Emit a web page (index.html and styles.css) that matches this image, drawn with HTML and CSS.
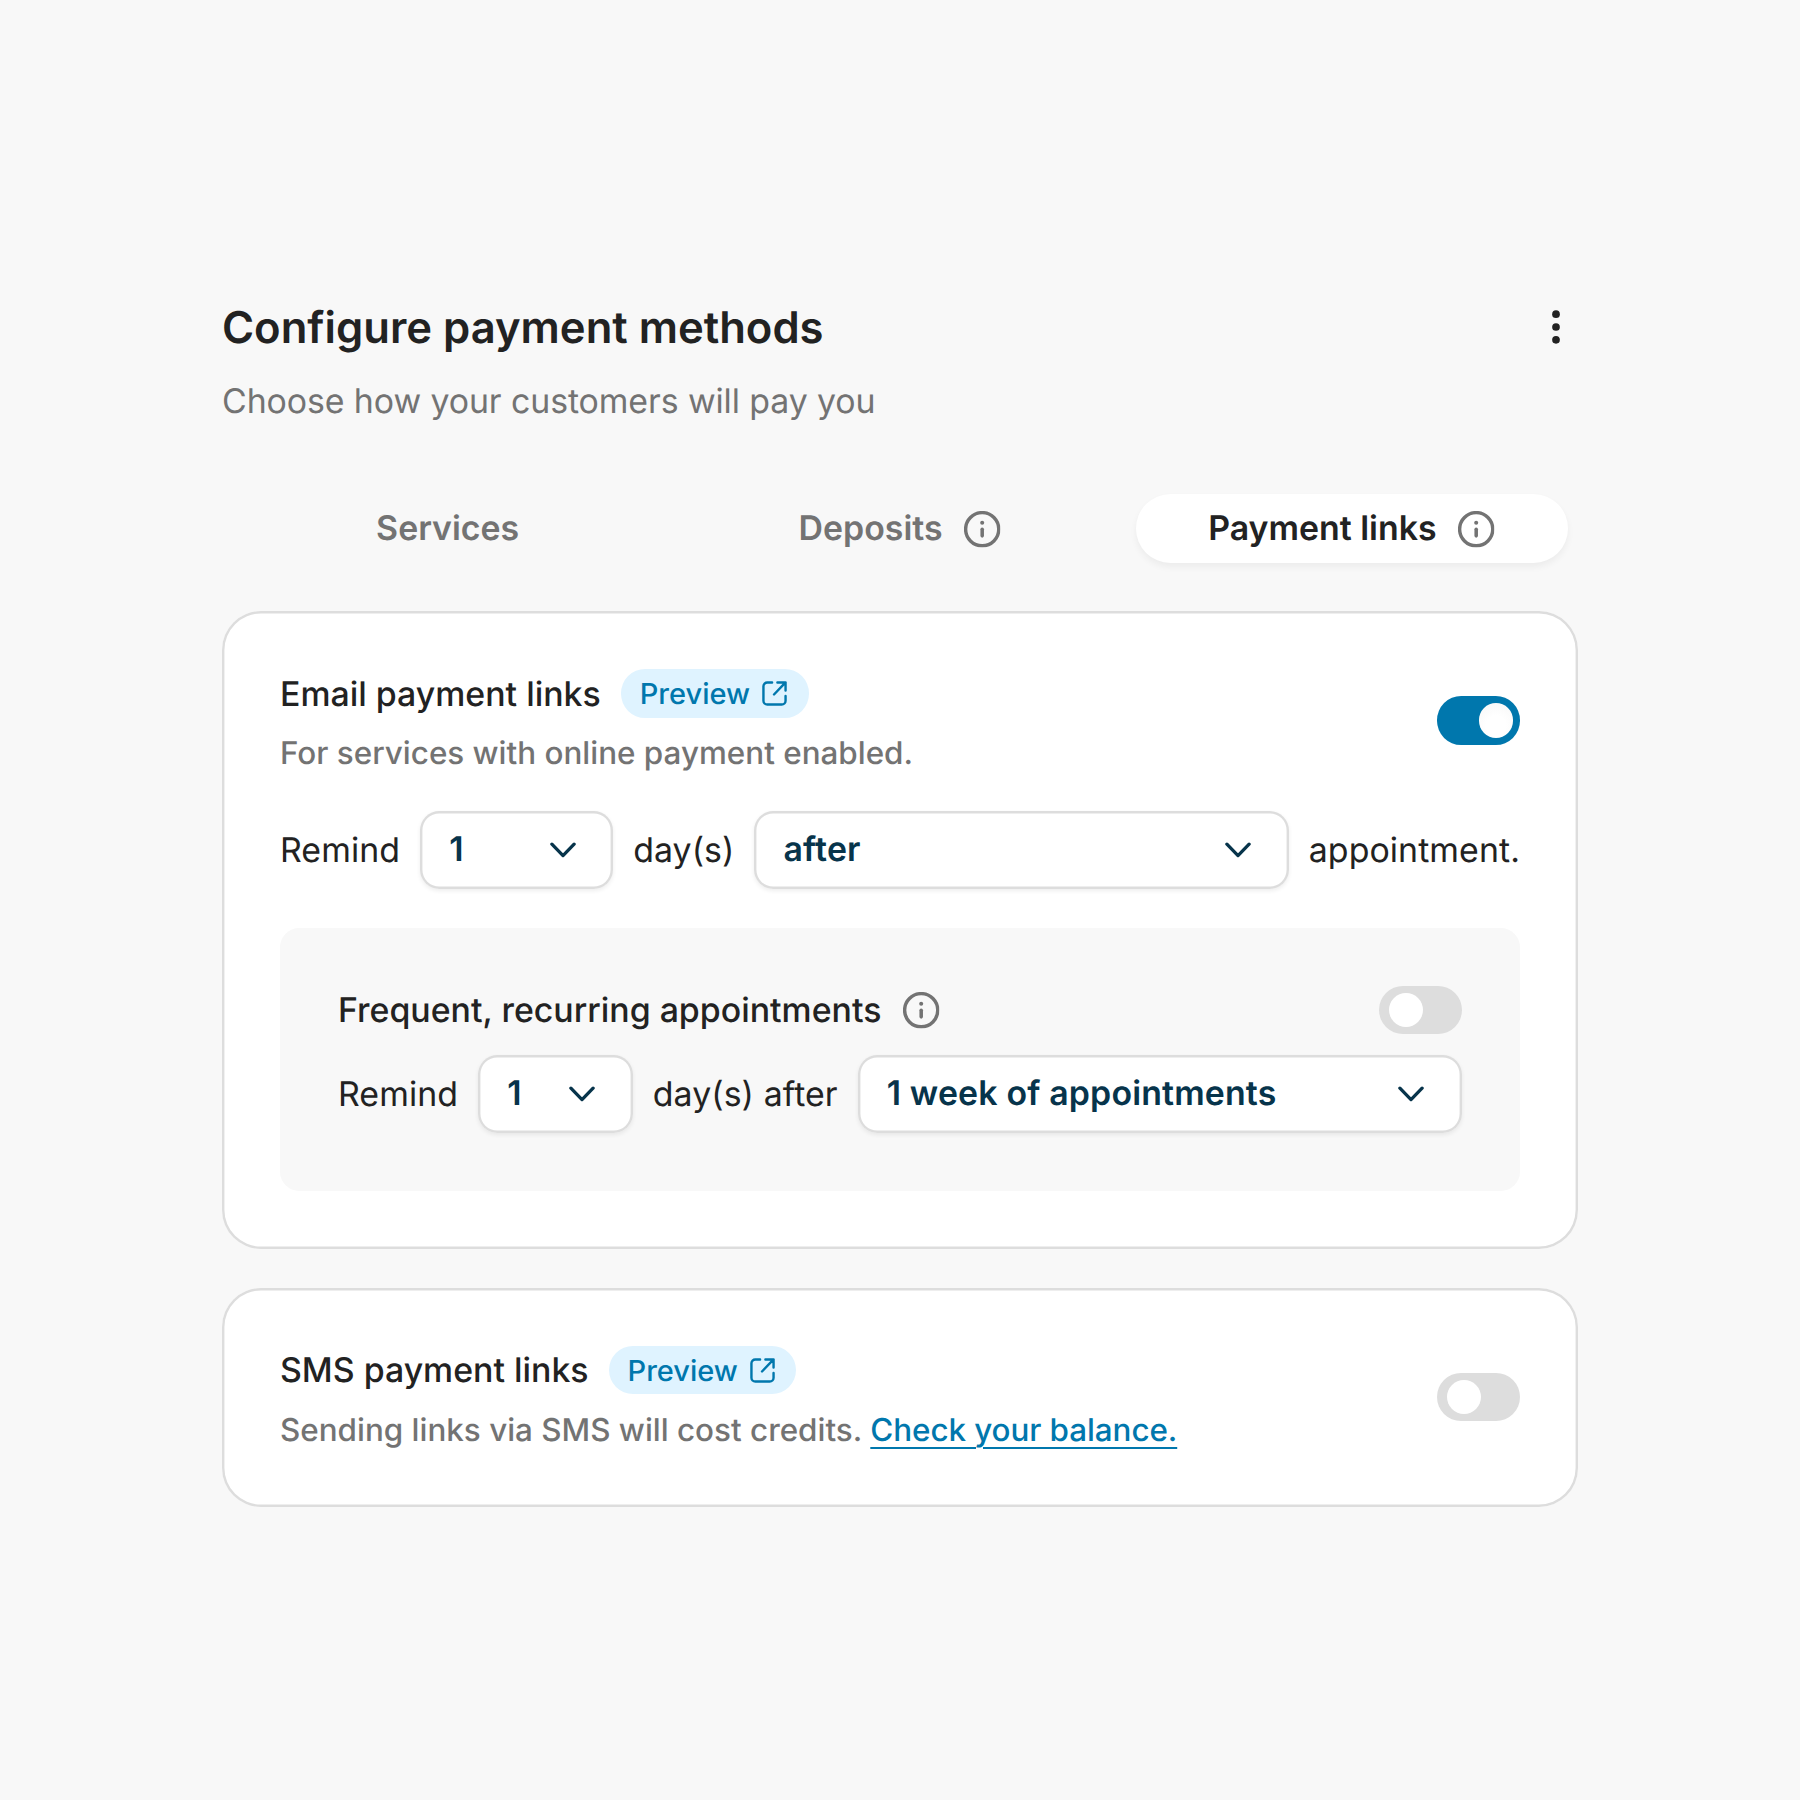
FILE: index.html
```html
<!DOCTYPE html>
<html lang="en">
<head>
<meta charset="utf-8">
<title>Configure payment methods</title>
<link rel="stylesheet" href="styles.css">
</head>
<body>
<svg class="defs" aria-hidden="true">
  <symbol id="info" viewBox="0 0 36 36"><circle cx="18" cy="18" r="16.4" fill="none" stroke="currentColor" stroke-width="3.4"/><circle cx="18" cy="11.7" r="2" fill="currentColor"/><path d="M18 18v6.6" stroke="currentColor" stroke-width="3.5" stroke-linecap="round"/></symbol>
  <symbol id="chevron" viewBox="0 0 26 16"><path d="M1.9 2.2L13 13.6L24.1 2.2" fill="none" stroke="currentColor" stroke-width="3.3" stroke-linecap="round" stroke-linejoin="round"/></symbol>
  <symbol id="external" viewBox="0 0 26 26"><path d="M10.5 1.5H5.5A4 4 0 0 0 1.5 5.5V20.5A4 4 0 0 0 5.5 24.5H20.5A4 4 0 0 0 24.5 20.5V15.5M16 1.5H24.5V10M24.5 1.5L12.5 14" fill="none" stroke="currentColor" stroke-width="2.5" stroke-linecap="round" stroke-linejoin="round"/></symbol>
</svg>
<main class="page">
  <header class="header">
    <h1 class="title">Configure payment methods</h1>
    <button class="menu" aria-label="More"><svg class="dots" viewBox="0 0 8 34"><circle cx="4" cy="4.2" r="3.85"/><circle cx="4" cy="17" r="3.85"/><circle cx="4" cy="29.8" r="3.85"/></svg></button>
  </header>
  <p class="subtitle">Choose how your customers will pay you</p>
  <nav class="tabs">
    <a class="tab"><span>Services</span></a>
    <a class="tab"><span>Deposits</span><svg class="info"><use href="#info"/></svg></a>
    <a class="tab active"><span>Payment links</span><svg class="info"><use href="#info"/></svg></a>
  </nav>
  <section class="card">
    <div class="row">
      <div class="text">
        <div class="heading"><h2 class="name">Email payment links</h2><a class="preview">Preview<svg class="external"><use href="#external"/></svg></a></div>
        <p class="desc">For services with online payment enabled.</p>
      </div>
      <span class="toggle on"></span>
    </div>
    <div class="remind">
      <span class="label">Remind</span>
      <span class="select days"><span class="value">1</span><svg class="chevron"><use href="#chevron"/></svg></span>
      <span class="label">day(s)</span>
      <span class="select grow"><span class="value">after</span><svg class="chevron"><use href="#chevron"/></svg></span>
      <span class="label">appointment.</span>
    </div>
    <div class="panel">
      <div class="row">
        <div class="heading"><h2 class="name">Frequent, recurring appointments</h2><svg class="info"><use href="#info"/></svg></div>
        <span class="toggle"></span>
      </div>
      <div class="remind">
        <span class="label">Remind</span>
        <span class="select short"><span class="value">1</span><svg class="chevron"><use href="#chevron"/></svg></span>
        <span class="label">day(s) after</span>
        <span class="select grow"><span class="value">1 week of appointments</span><svg class="chevron"><use href="#chevron"/></svg></span>
      </div>
    </div>
  </section>
  <section class="card">
    <div class="row">
      <div class="text">
        <div class="heading"><h2 class="name">SMS payment links</h2><a class="preview">Preview<svg class="external"><use href="#external"/></svg></a></div>
        <p class="desc">Sending links via SMS will cost credits. <a class="link">Check your balance.</a></p>
      </div>
      <span class="toggle"></span>
    </div>
  </section>
</main>
</body>
</html>
```
FILE: styles.css
```css
* { box-sizing: border-box; margin: 0; padding: 0; }
body { background: #f8f8f8; color: #222; font-family: Inter, "Liberation Sans", sans-serif; font-size: 33.87px; text-rendering: geometricPrecision; }
.defs { position: absolute; width: 0; height: 0; }
.page { width: 1356px; margin: 0 auto; padding-top: 299px; }
.header { display: flex; justify-content: space-between; align-items: center; height: 58px; }
.title { font-size: 43.6px; font-weight: 600; line-height: 58px; }
.menu { display: flex; justify-content: center; width: 44px; padding-bottom: 2px; border: 0; background: none; }
.dots { width: 8px; height: 34px; fill: #222; }
.subtitle { margin-top: 20px; line-height: 50px; letter-spacing: -.09px; color: #737373; }
.tabs { display: flex; gap: 19.5px; height: 87px; margin-top: 58px; padding: 9px 10px; }
.tab { flex: 1; display: flex; align-items: center; justify-content: center; gap: 21.5px; padding-right: 1px; border-radius: 35px; color: #737373; font-weight: 600; line-height: 41px; }
.tab.active { background: #fff; color: #222; box-shadow: 0 4px 7px rgba(0, 0, 0, .05); }
.info { width: 36.4px; height: 36.4px; color: #737373; overflow: visible; }
.tab .info { margin-top: 1px; }
.label { padding-top: 1px; line-height: 41px; letter-spacing: .08px; }
.card { border-radius: 39px; background: #fff; padding: 58px; box-shadow: inset 0 0 0 2.42px #ddd; }
.tabs + .card { margin-top: 39.4px; height: 638px; }
.card + .card { margin-top: 38.6px; height: 218.7px; }
.row { display: flex; justify-content: space-between; align-items: center; }
.heading { display: flex; align-items: center; gap: 20px; height: 48.3px; }
.panel .heading { gap: 21.5px; }
.name { padding-top: 1.4px; font-size: 33.87px; font-weight: 500; line-height: 41px; }
.preview { display: flex; align-items: center; gap: 12px; height: 48.3px; padding: 0 21.5px 0 19px; border-radius: 24.2px; background: #dff3ff; color: #0077ad; font-size: 29px; font-weight: 500; }
.external { width: 25px; height: 25px; }
.desc { margin-top: 17.7px; line-height: 36px; font-size: 31.4px; font-weight: 500; color: #737373; }
.link { color: #0077ad; text-decoration: underline; text-decoration-thickness: 2.4px; text-underline-offset: 6px; letter-spacing: -.08px; }
.toggle { display: flex; align-items: center; width: 82.7px; height: 48.3px; padding: 0 9.3px; border-radius: 24.2px; background: #ddd; }
.toggle::after { content: ""; width: 34.3px; height: 34.3px; border-radius: 50%; background: #fff; }
.toggle.on { justify-content: flex-end; padding-right: 7px; background: #0077ad; }
.toggle.on::after { background: radial-gradient(circle at 50% 65%, #fff 35%, #f6f6f6); }
.remind { display: flex; align-items: center; gap: 20px; margin-top: 39.3px; white-space: nowrap; }
.select { display: flex; align-items: center; justify-content: space-between; height: 78.3px; padding: 0 37.5px 0 29px; border-radius: 19.3px; background: #fff; color: #07344b; font-weight: 600; box-shadow: inset 0 0 0 2.42px #ddd, 0 2px 4px rgba(0, 0, 0, .07); }
.value { padding-bottom: 1px; letter-spacing: .16px; }
.days { width: 193px; }
.short { width: 154.6px; }
.grow { flex: 1; padding-right: 38px; }
.chevron { width: 26px; height: 16px; }
.panel { height: 263.3px; margin-top: 38.8px; padding: 58px; border-radius: 19.3px; background: #f8f8f8; }
.panel .remind { margin-top: 20.7px; }
```
